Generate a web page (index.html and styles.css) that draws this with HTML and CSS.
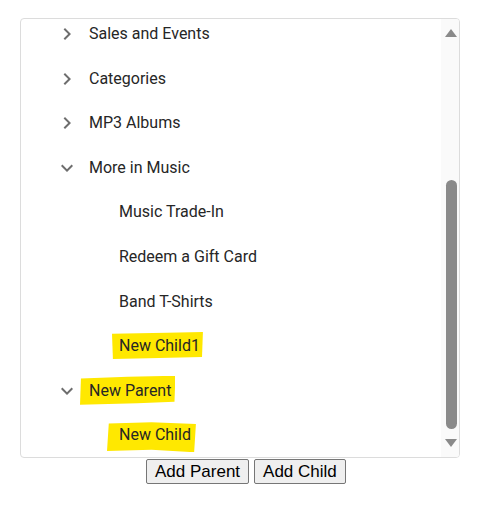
FILE: index.html
```html
<!DOCTYPE html>
<html>
<head>
<meta charset="utf-8">
<link rel="stylesheet" href="styles.css">
</head>
<body>
<div class="page">
  <div class="tree">
    <div class="viewport">
      <ul class="list">
        <li class="row lvl1">
          <svg class="chev" viewBox="0 0 24 24"><path d="M10 6L8.59 7.41 13.17 12l-4.58 4.59L10 18l6-6z"/></svg>
          <span class="label">Sales and Events</span>
        </li>
        <li class="row lvl1">
          <svg class="chev" viewBox="0 0 24 24"><path d="M10 6L8.59 7.41 13.17 12l-4.58 4.59L10 18l6-6z"/></svg>
          <span class="label">Categories</span>
        </li>
        <li class="row lvl1">
          <svg class="chev" viewBox="0 0 24 24"><path d="M10 6L8.59 7.41 13.17 12l-4.58 4.59L10 18l6-6z"/></svg>
          <span class="label">MP3 Albums</span>
        </li>
        <li class="row lvl1">
          <svg class="chev" viewBox="0 0 24 24"><path d="M16.59 8.59L12 13.17 7.41 8.59 6 10l6 6 6-6z"/></svg>
          <span class="label">More in Music</span>
        </li>
        <li class="row lvl2"><span class="label">Music Trade-In</span></li>
        <li class="row lvl2"><span class="label">Redeem a Gift Card</span></li>
        <li class="row lvl2"><span class="label">Band T-Shirts</span></li>
        <li class="row lvl2"><span class="label mark mark-a">New Child1</span></li>
        <li class="row lvl1">
          <svg class="chev" viewBox="0 0 24 24"><path d="M16.59 8.59L12 13.17 7.41 8.59 6 10l6 6 6-6z"/></svg>
          <span class="label mark mark-b">New Parent</span>
        </li>
        <li class="row lvl2"><span class="label mark mark-c">New Child</span></li>
      </ul>
    </div>
    <div class="scrollbar">
      <div class="sb-btn"><span class="arrow-up"></span></div>
      <div class="sb-track"><div class="sb-thumb"></div></div>
      <div class="sb-btn"><span class="arrow-down"></span></div>
    </div>
  </div>
  <div class="actions">
    <button class="btn">Add Parent</button>
    <button class="btn">Add Child</button>
  </div>
</div>
</body>
</html>
```
FILE: styles.css
```css
html, body {
  margin: 0;
  padding: 0;
  background: #ffffff;
}
body {
  padding: 18px 0 0 20px;
  font-family: Roboto, "Liberation Sans", sans-serif;
}
.page {
  width: 440px;
}
.tree {
  box-sizing: border-box;
  width: 440px;
  height: 440px;
  border: 1px solid #dcdcdc;
  border-radius: 4px;
  display: flex;
  overflow: hidden;
}
.viewport {
  flex: 1;
  overflow: hidden;
}
.list {
  list-style: none;
  margin: -7px 0 0 0;
  padding: 0;
}
.row {
  height: 44.56px;
  display: flex;
  align-items: center;
  font-size: 16px;
  color: #262626;
}
.lvl1 {
  padding-left: 34px;
}
.lvl2 {
  padding-left: 98px;
}
.chev {
  width: 24px;
  height: 24px;
  fill: #6e6e6e;
  margin-right: 10px;
  flex: none;
}
.label {
  white-space: nowrap;
  line-height: 20px;
}
.mark {
  position: relative;
  z-index: 0;
}
.mark::before {
  content: "";
  position: absolute;
  z-index: -1;
  background: #ffe800;
}
.mark-a::before {
  left: -7px;
  right: -3px;
  top: -4px;
  bottom: -3px;
  clip-path: polygon(0 6%, 60% 2%, 100% 0, 99% 92%, 40% 97%, 1% 100%);
}
.mark-b::before {
  left: -9px;
  right: -4px;
  top: -5px;
  bottom: -4px;
  clip-path: polygon(1% 10%, 50% 4%, 100% 0, 99% 90%, 60% 95%, 0 100%);
}
.mark-c::before {
  left: -12px;
  right: -5px;
  top: -3px;
  bottom: -7px;
  clip-path: polygon(2% 4%, 50% 0, 100% 6%, 98% 100%, 50% 92%, 0 96%);
}
.scrollbar {
  width: 18px;
  background: #fafafa;
  display: flex;
  flex-direction: column;
  flex: none;
}
.sb-btn {
  height: 28px;
  display: flex;
  align-items: center;
  justify-content: center;
  flex: none;
}
.arrow-up {
  width: 0;
  height: 0;
  border-left: 6px solid transparent;
  border-right: 6px solid transparent;
  border-bottom: 8px solid #8a8a8a;
  margin-left: 1px;
}
.arrow-down {
  width: 0;
  height: 0;
  border-left: 6px solid transparent;
  border-right: 6px solid transparent;
  border-top: 8px solid #8a8a8a;
  margin-left: 1px;
}
.sb-track {
  flex: 1;
  display: flex;
  flex-direction: column;
  justify-content: flex-end;
  align-items: center;
}
.sb-thumb {
  width: 11px;
  height: 249px;
  border-radius: 6px;
  background: #8a8a8a;
  margin-left: 2px;
}
.actions {
  display: flex;
  gap: 5px;
  padding-left: 126px;
  margin-top: 1px;
}
.btn {
  font-family: "Liberation Sans", Arial, sans-serif;
  font-size: 17px;
  height: 25px;
  padding: 1px 8px;
  border: 1px solid #767676;
  border-radius: 2px;
  background: #efefef;
  color: #000;
  line-height: 19px;
}
```
